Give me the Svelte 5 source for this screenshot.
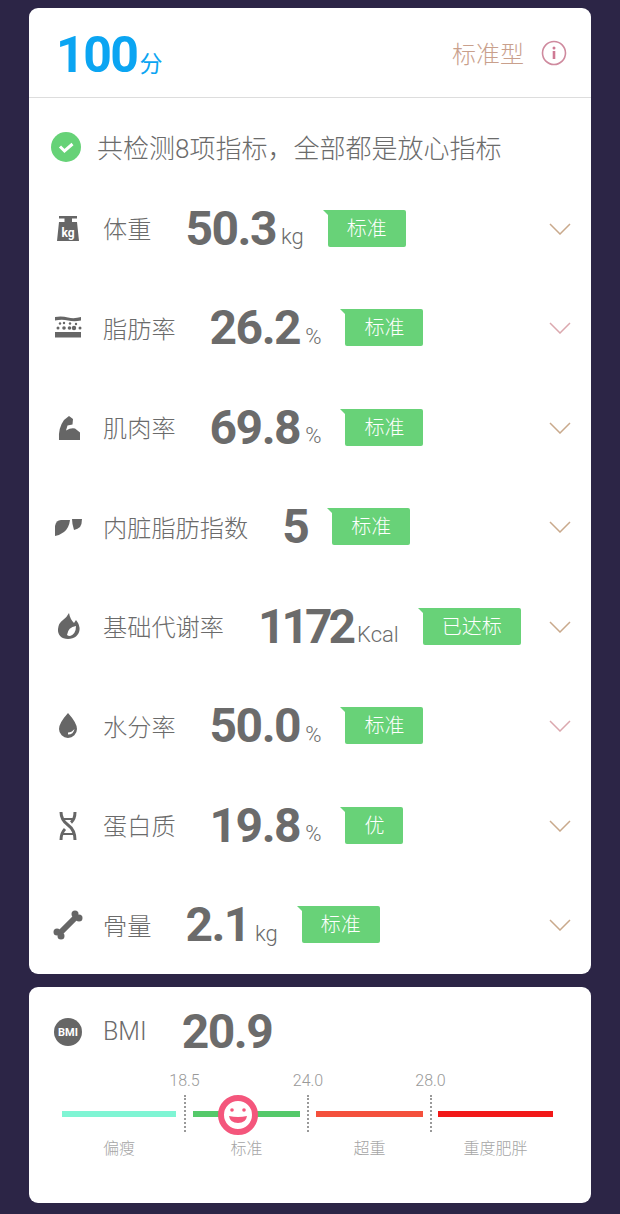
<script>
	const rows = [
		{ icon: 'weight', label: '体重', value: '50.3', unit: 'kg', tag: '标准' },
		{ icon: 'fat', label: '脂肪率', value: '26.2', unit: '%', tag: '标准', pink: true },
		{ icon: 'muscle', label: '肌肉率', value: '69.8', unit: '%', tag: '标准' },
		{ icon: 'liver', label: '内脏脂肪指数', value: '5', unit: '', tag: '标准' },
		{ icon: 'fire', label: '基础代谢率', value: '1172', unit: 'Kcal', tag: '已达标', tight: true },
		{ icon: 'drop', label: '水分率', value: '50.0', unit: '%', tag: '标准', pink: true },
		{ icon: 'dna', label: '蛋白质', value: '19.8', unit: '%', tag: '优' },
		{ icon: 'bone', label: '骨量', value: '2.1', unit: 'kg', tag: '标准' }
	]
</script>

<div class="page">
	<section class="card main">
		<header class="head">
			<div class="score"><span class="num">100</span><span class="fen">分</span></div>
			<div class="type">
				<span>标准型</span>
				<svg width="26" height="26" viewBox="0 0 26 26" fill="none">
					<circle cx="13" cy="13" r="11.5" stroke="#cf8a9e" stroke-width="1.6" />
					<circle cx="13" cy="8" r="1.5" fill="#cf7a94" />
					<rect x="11.700" y="11" width="2.600" height="8" fill="#cf7a94" />
				</svg>
			</div>
		</header>

		<div class="summary">
			<svg width="30" height="30" viewBox="0 0 30 30">
				<circle cx="15" cy="15" r="15" fill="#66d277" />
				<path d="M9 14.500l4.500 4.500 8-7" fill="none" stroke="#fff" stroke-width="3" />
			</svg>
			<span>共检测8项指标，全部都是放心指标</span>
		</div>

		{#each rows as row}
			<div class="row">
				<div class="icon">
					<svg width="30" height="30" viewBox="0 0 30 30" fill="#666">
						{#if row.icon === 'weight'}
							<path d="M6 2h18v2.500h-5v3.500H24l2 19H4L6 8h5.500V4.500H6z" />
							<text x="15" y="23" text-anchor="middle" class="kg">kg</text>
						{:else if row.icon === 'fat'}
							<path d="M2 4q7-1 13 .5t13-.5v3.500q-7 1.500-13 0t-13 0z" />
							<rect x="2" y="19" width="26" height="5.500" />
							<circle cx="7" cy="10.500" r="1.200" /><circle cx="11" cy="10" r="1.200" /><circle cx="17" cy="10.500" r="1.200" /><circle cx="23" cy="11" r="1.200" />
							<circle cx="5" cy="15" r="1.500" /><circle cx="11" cy="15" r="1.800" /><circle cx="16.500" cy="15" r="1.800" /><circle cx="21" cy="15" r="2.200" /><circle cx="27" cy="15" r="1.500" />
						{:else if row.icon === 'muscle'}
							<path d="M6 27q-1-12 5-20l5-4 4 3-.5 5.500-5 1-1.500 5q5-3 9-2l5 4v7.500z" />
						{:else if row.icon === 'liver'}
							<path d="M2 24V14q1-6 6-6h9q-1 8-6 12-4 3-9 4z" />
							<path d="M19 7h10q0 5-2 8-2 2-6 3-2-6-2-11z" />
						{:else if row.icon === 'fire'}
							<path d="M16 1q1 6 5 10l2-3q4 5 3.500 10c-.5 5-5 9-11.500 9S4.500 23 5 17q.5-6 5-9 4-3 6-7zM23 14q-8 1-9 9 1 1 3 1 6-2 6-10z" fill-rule="evenodd" />
						{:else if row.icon === 'drop'}
							<path d="M15 2q9 10 9 16a9 9 0 0 1-18 0q0-6 9-16zM21.500 18q-3 3.500-6.500 3.500v2q5.500 0 6.500-5.500z" fill-rule="evenodd" />
						{:else if row.icon === 'dna'}
							<g fill="none" stroke="#666" stroke-width="3">
								<path d="M8 1q0 8 7 13t7 15" />
								<path d="M22 1q0 7-4 10.500M12 18q-4 4-4 11" />
								<path d="M10 8h10M10 23h10" stroke-width="2" />
							</g>
						{:else}
							<path d="M7 23L23 7" stroke="#666" stroke-width="6" />
							<circle cx="22" cy="4" r="3.500" /><circle cx="26" cy="8" r="3.500" />
							<circle cx="4" cy="22" r="3.500" /><circle cx="8" cy="26" r="3.500" />
						{/if}
					</svg>
				</div>
				<span class="label">{row.label}</span>
				<span class="value" class:tight={row.tight}>{row.value}</span>
				{#if row.unit}<span class="unit">{row.unit}</span>{/if}
				<span class="tag">{row.tag}</span>
				<svg class="chev" width="22" height="12" viewBox="0 0 22 12" fill="none">
					<path d="M1 1l10 10 10-10" stroke={row.pink ? '#dba8ae' : '#c9a98c'} stroke-width="1.500" />
				</svg>
			</div>
		{/each}
	</section>

	<section class="card bmi">
		<div class="bmi-top">
			<div class="icon">
				<svg width="30" height="30" viewBox="0 0 30 30">
					<circle cx="15" cy="15" r="14" fill="#666" />
					<text x="15" y="19" text-anchor="middle" class="bmi-txt">BMI</text>
				</svg>
			</div>
			<span class="label bmi-label">BMI</span>
			<span class="value">20.9</span>
		</div>
		<div class="scale">
			<span class="val v1">18.5</span>
			<span class="val v2">24.0</span>
			<span class="val v3">28.0</span>

			<span class="bar b1"></span>
			<span class="tick t1"></span>
			<span class="bar b2"></span>
			<span class="tick t2"></span>
			<span class="bar b3"></span>
			<span class="tick t3"></span>
			<span class="bar b4"></span>

			<span class="name n1">偏瘦</span>
			<span class="name n2">标准</span>
			<span class="name n3">超重</span>
			<span class="name n4">重度肥胖</span>

			<svg class="face" width="40" height="40" viewBox="0 0 40 40">
				<circle cx="20" cy="20" r="17" fill="#fff" stroke="#f4567c" stroke-width="6" />
				<circle cx="14" cy="15" r="1.800" fill="#f4567c" />
				<circle cx="26" cy="15" r="1.800" fill="#f4567c" />
				<path d="M11 21q9 2 18 0q-1 7-9 7t-9-7z" fill="#f4567c" />
			</svg>
		</div>
	</section>
</div>

<style>
	:global(body) {
		margin: 0;
		background: #2c2546;
	}

	.page {
		width: 620px;
		height: 1214px;
		padding: 8px 29px 0;
		box-sizing: border-box;
		background: #2c2546;
		font-family: Roboto, "Noto Sans CJK SC", sans-serif;
		color: #6b6b6b;
		overflow: hidden;
	}

	.card {
		background: #fff;
		border-radius: 9px;
	}

	.main {
		height: 966px;
		margin-bottom: 13px;
	}

	.head {
		display: flex;
		justify-content: space-between;
		align-items: center;
		height: 90px;
		padding: 4px 24px 0 27px;
		box-sizing: border-box;
		border-bottom: 1px solid #ddd;
	}

	.score {
		display: flex;
		align-items: baseline;
		color: #0ba5f2;
	}

	.score .num {
		font-size: 50px;
		font-weight: 700;
		letter-spacing: -1.500px;
	}

	.score .fen {
		font-size: 23px;
		margin-left: 2px;
	}

	.type {
		display: flex;
		align-items: center;
		gap: 17px;
		font-size: 24px;
		font-weight: 300;
		color: #c9a08c;
		margin-top: -4px;
	}

	.summary {
		display: flex;
		align-items: center;
		gap: 16px;
		height: 97px;
		padding-left: 22px;
		font-size: 26px;
		font-weight: 300;
		margin-bottom: -16px;
	}

	.row {
		display: flex;
		align-items: center;
		height: 99.500px;
	}

	.icon {
		width: 74px;
		flex: none;
		display: flex;
		justify-content: center;
		padding-left: 4px;
		box-sizing: border-box;
	}

	.label {
		font-size: 24.200px;
		font-weight: 300;
		margin: -2px 34px 0 0;
	}

	.bmi-label {
		font-size: 25px;
		margin-right: 35px;
	}

	.value {
		font-size: 48px;
		font-weight: 700;
		line-height: 1;
		letter-spacing: -1.500px;
	}

	.value.tight {
		letter-spacing: -4px;
	}

	.unit {
		font-size: 22px;
		font-weight: 300;
		margin: 16px 0 0 5px;
	}

	.tag {
		position: relative;
		margin: -1px 0 0 24px;
		padding: 0 19px;
		height: 37px;
		line-height: 39px;
		font-size: 20px;
		font-weight: 300;
		color: #fff;
		background: #68d278;
		border-radius: 0 2px 2px 2px;
	}

	.tag::before {
		content: "";
		position: absolute;
		left: -5px;
		top: 0;
		border-top: 5px solid #68d278;
		border-left: 5px solid transparent;
	}

	.chev {
		margin-left: auto;
		margin-right: 20px;
	}

	.bmi {
		height: 216px;
		padding-top: 18px;
		box-sizing: border-box;
	}

	.bmi-top {
		display: flex;
		align-items: center;
		height: 54px;
	}

	.scale {
		position: relative;
		display: grid;
		grid-template-columns: 114px 17px 107px 16px 107px 15px 115px;
		grid-template-rows: 26px 37px 34px;
		margin: 10px 0 0 33px;
		width: 491px;
	}

	.val {
		grid-row: 1;
		justify-self: center;
		font-size: 16px;
		font-weight: 300;
		color: #999;
		line-height: 24px;
		white-space: nowrap;
	}

	.v1 { grid-column: 2; }
	.v2 { grid-column: 4; }
	.v3 { grid-column: 6; }

	.bar {
		grid-row: 2;
		align-self: center;
		height: 6px;
	}

	.b1 { grid-column: 1; background: #7ff5d4; }
	.b2 { grid-column: 3; background: #55c96a; }
	.b3 { grid-column: 5; background: #f4503c; }
	.b4 { grid-column: 7; background: #f21818; }

	.tick {
		grid-row: 2;
		justify-self: center;
		width: 0;
		border-left: 2px dotted #999;
	}

	.t1 { grid-column: 2; }
	.t2 { grid-column: 4; }
	.t3 { grid-column: 6; }

	.name {
		grid-row: 3;
		justify-self: center;
		font-size: 16px;
		font-weight: 300;
		color: #a5a5a5;
		line-height: 34px;
	}

	.n1 { grid-column: 1; }
	.n2 { grid-column: 3; }
	.n3 { grid-column: 5; }
	.n4 { grid-column: 7; }

	.face {
		position: absolute;
		left: 156px;
		top: 26px;
	}

	.kg {
		font: 700 12px Roboto, sans-serif;
		fill: #fff;
	}

	.bmi-txt {
		font: 700 11px Roboto, sans-serif;
		fill: #fff;
	}
</style>
